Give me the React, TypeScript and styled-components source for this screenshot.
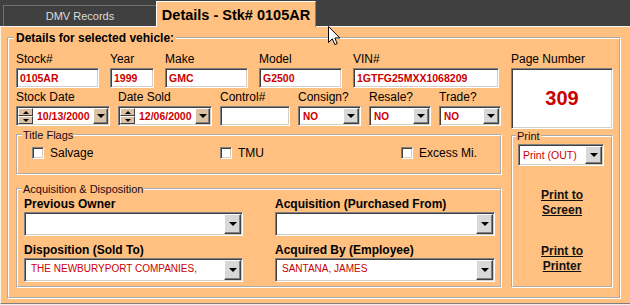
import React from "react"
import styled, { createGlobalStyle, css } from "styled-components"

const ORANGE = "#ffc080"
const RED = "#cc0000"

const GlobalStyle = createGlobalStyle`
  html, body {
    margin: 0;
    padding: 0;
    background: #f0f0f0;
  }
  body {
    font-family: "Liberation Sans", Arial, sans-serif;
    color: #000;
  }
`;

const sunken = css`
  box-sizing: border-box;
  border: 1px solid;
  border-color: #808080 #ffffff #ffffff #808080;
  box-shadow: inset 1px 1px 0 #404040, inset -1px -1px 0 #d4d0c8;
  background: #fff;
`;

const Screen = styled.div`
  position: relative;
  width: 630px;
  height: 305px;
  overflow: hidden;
`;

const TabStrip = styled.div`
  height: 26px;
  background: #404040;
  display: flex;
  align-items: flex-end;
  padding-left: 3px;
`;

const Tab = styled.div<{ $active?: boolean }>`
  box-sizing: border-box;
  display: flex;
  align-items: center;
  justify-content: center;
  ${p => p.$active ? css`
    position: relative;
    z-index: 1;
    width: 160px;
    height: 26px;
    margin-bottom: -1px;
    padding-top: 1px;
    background: ${ORANGE};
    border-top: 1px solid #ffffff;
    border-left: 1px solid #ffffff;
    border-right: 1px solid #808080;
    font-size: 14.5px;
    font-weight: bold;
    color: #000;
  ` : css`
    width: 153px;
    height: 21px;
    border-top: 1px solid #707070;
    border-left: 1px solid #707070;
    font-size: 11px;
    color: #dcdcdc;
  `}
`;

const Panel = styled.div`
  background: ${ORANGE};
  border-top: 1px solid #f4f4f4;
  border-left: 1px solid #fff4e8;
  border-bottom: 1px solid #808080;
  padding: 4px 9px 4px 6px;
`;

const Group = styled.fieldset`
  margin: 0;
  min-width: 0;
  border: 2px groove #ffffff;
`;

const MainGroup = styled(Group)`
  padding: 7px 6px 9px 7px;
`;

const FlagsGroup = styled(Group)`
  margin-top: 3px;
  padding: 5px 6px 13px 6px;
`;

const AcqGroup = styled(Group)`
  margin-top: 8px;
  padding: 2px 5px 4px 6px;
`;

const PrintGroup = styled(Group)`
  flex: 1;
  margin-top: 1px;
  padding: 2px 5px 0 5px;
`;

const BigLegend = styled.legend`
  margin-left: -2px;
  padding: 0 2px;
  font-size: 12px;
  line-height: 14px;
  font-weight: bold;
`;

const SmallLegend = styled.legend`
  margin-left: -2px;
  padding: 0 1px;
  font-size: 11px;
  line-height: 12px;
  color: #1a0a1a;
`;

const Body = styled.div`
  display: grid;
  grid-template-columns: 486px 102px;
  column-gap: 9px;
`;

const Column = styled.div`
  display: flex;
  flex-direction: column;
`;

const FieldRow = styled.div<{ $cols: string; $gap: number; $top?: number }>`
  display: grid;
  grid-template-columns: ${p => p.$cols};
  column-gap: ${p => p.$gap}px;
  margin-top: ${p => p.$top ?? 0}px;
`;

const Field = styled.div`
  display: flex;
  flex-direction: column;
  min-width: 0;
`;

const FieldLabel = styled.div`
  font-size: 12px;
  line-height: 14px;
  margin-bottom: 2px;
  white-space: nowrap;
`;

const BoldLabel = styled.div`
  font-size: 12px;
  line-height: 14px;
  font-weight: bold;
  margin-bottom: 1px;
  white-space: nowrap;
`;

const TextBox = styled.div`
  ${sunken};
  height: 20px;
  padding: 0 3px;
  font-size: 10.5px;
  font-weight: bold;
  line-height: 18px;
  color: ${RED};
  white-space: nowrap;
  overflow: hidden;
`;

const DropButton = styled.div<{ $w?: number; $tan?: boolean }>`
  box-sizing: border-box;
  flex: none;
  width: ${p => p.$w ?? 16}px;
  align-self: stretch;
  display: flex;
  align-items: center;
  justify-content: center;
  background: ${p => (p.$tan ? "#dcc2a4" : "#d8d8d8")};
  border: 1px solid;
  border-color: #ffffff #404040 #404040 #ffffff;
  box-shadow: inset -1px -1px 0 #808080;

  &::after {
    content: "";
    border-left: 4px solid transparent;
    border-right: 4px solid transparent;
    border-top: 4px solid #000;
  }
`;

const SelectBox = styled.div<{ $h: number }>`
  ${sunken};
  height: ${p => p.$h}px;
  padding: 1px;
  display: flex;
`;

const SelectText = styled.div<{ $bold?: boolean; $top?: boolean }>`
  flex: 1;
  min-width: 0;
  display: flex;
  align-items: ${p => (p.$top ? "flex-start" : "center")};
  padding: ${p => (p.$top ? "2px 5px 0" : "0 3px")};
  font-size: ${p => (p.$bold ? "10px" : "10.5px")};
  font-weight: ${p => (p.$bold ? "bold" : "normal")};
  color: ${RED};
  white-space: nowrap;
  overflow: hidden;
`;

const ComboText = styled(SelectText)`
  font-size: 10px;
  padding: 3px 5px 0;
`;

const Spinner = styled.div`
  flex: none;
  width: 15px;
  display: flex;
  flex-direction: column;
`;

const SpinButton = styled.div<{ $up?: boolean }>`
  box-sizing: border-box;
  flex: 1;
  display: flex;
  align-items: center;
  justify-content: center;
  background: #dcc2a4;
  border: 1px solid;
  border-color: #ffffff #404040 #404040 #ffffff;

  &::after {
    content: "";
    border-left: 3px solid transparent;
    border-right: 3px solid transparent;
    ${p => (p.$up ? "border-bottom: 3px solid #000;" : "border-top: 3px solid #000;")}
  }
`;

const DateText = styled.div`
  flex: 1;
  display: flex;
  align-items: center;
  padding-left: 4px;
  font-size: 10.5px;
  font-weight: bold;
  color: ${RED};
  white-space: nowrap;
`;

const FlagRow = styled.div`
  display: grid;
  grid-template-columns: 188px 181px auto;
  padding-left: 8px;
`;

const CheckItem = styled.label`
  display: flex;
  align-items: center;
  gap: 6px;
  font-size: 12px;
  line-height: 14px;
`;

const CheckBox = styled.span`
  ${sunken};
  width: 12px;
  height: 12px;
  flex: none;
`;

const AcqGrid = styled.div`
  display: grid;
  grid-template-columns: 219px 220px;
  column-gap: 32px;
  row-gap: 7px;
`;

const PageBox = styled.div`
  ${sunken};
  height: 61px;
  display: flex;
  align-items: center;
  justify-content: center;
  font-size: 20px;
  font-weight: bold;
  color: ${RED};
`;

const PrintInner = styled.div`
  display: flex;
  flex-direction: column;
  align-items: flex-start;
`;

const PrintSelect = styled(SelectBox)`
  width: 86px;
`;

const PrintLink = styled.a<{ $top: number }>`
  align-self: stretch;
  margin-top: ${p => p.$top}px;
  font-size: 12px;
  line-height: 15px;
  font-weight: bold;
  text-align: center;
  text-decoration: underline;
  color: #111;
  cursor: pointer;
`;

const Cursor = styled.svg`
  position: absolute;
  left: 328px;
  top: 26px;
`;

const Select = ({ value }: { value: string }) => (
  <SelectBox $h={20}>
    <SelectText $bold>{value}</SelectText>
    <DropButton />
  </SelectBox>
)

const Combo = ({ value }: { value?: string }) => (
  <SelectBox $h={24}>
    <ComboText $top>{value}</ComboText>
    <DropButton $w={17} />
  </SelectBox>
)

const DateField = ({ value }: { value: string }) => (
  <SelectBox $h={20}>
    <Spinner>
      <SpinButton $up />
      <SpinButton />
    </Spinner>
    <DateText>{value}</DateText>
    <DropButton $w={15} $tan />
  </SelectBox>
)

const App = () => {
  return (
    <Screen>
      <GlobalStyle />
      <TabStrip>
        <Tab>DMV Records</Tab>
        <Tab $active>Details - Stk# 0105AR</Tab>
      </TabStrip>
      <Panel>
        <MainGroup>
          <BigLegend>Details for selected vehicle:</BigLegend>
          <Body>
            <Column>
              <FieldRow $cols="83px 44px 83px 83px 146px" $gap={11}>
                <Field><FieldLabel>Stock#</FieldLabel><TextBox>0105AR</TextBox></Field>
                <Field><FieldLabel>Year</FieldLabel><TextBox>1999</TextBox></Field>
                <Field><FieldLabel>Make</FieldLabel><TextBox>GMC</TextBox></Field>
                <Field><FieldLabel>Model</FieldLabel><TextBox>G2500</TextBox></Field>
                <Field><FieldLabel>VIN#</FieldLabel><TextBox>1GTFG25MXX1068209</TextBox></Field>
              </FieldRow>
              <FieldRow $cols="94px 94px 70px 63px 62px 62px" $gap={8} $top={2}>
                <Field><FieldLabel>Stock Date</FieldLabel><DateField value="10/13/2000" /></Field>
                <Field><FieldLabel>Date Sold</FieldLabel><DateField value="12/06/2000" /></Field>
                <Field><FieldLabel>Control#</FieldLabel><TextBox /></Field>
                <Field><FieldLabel>Consign?</FieldLabel><Select value="NO" /></Field>
                <Field><FieldLabel>Resale?</FieldLabel><Select value="NO" /></Field>
                <Field><FieldLabel>Trade?</FieldLabel><Select value="NO" /></Field>
              </FieldRow>

              <FlagsGroup>
                <SmallLegend>Title Flags</SmallLegend>
                <FlagRow>
                  <CheckItem><CheckBox />Salvage</CheckItem>
                  <CheckItem><CheckBox />TMU</CheckItem>
                  <CheckItem><CheckBox />Excess Mi.</CheckItem>
                </FlagRow>
              </FlagsGroup>

              <AcqGroup>
                <SmallLegend>Acquisition &amp; Disposition</SmallLegend>
                <AcqGrid>
                  <Field><BoldLabel>Previous Owner</BoldLabel><Combo /></Field>
                  <Field><BoldLabel>Acquisition (Purchased From)</BoldLabel><Combo /></Field>
                  <Field><BoldLabel>Disposition (Sold To)</BoldLabel><Combo value="THE NEWBURYPORT COMPANIES," /></Field>
                  <Field><BoldLabel>Acquired By (Employee)</BoldLabel><Combo value="SANTANA, JAMES" /></Field>
                </AcqGrid>
              </AcqGroup>
            </Column>

            <Column>
              <FieldLabel>Page Number</FieldLabel>
              <PageBox>309</PageBox>
              <PrintGroup>
                <SmallLegend>Print</SmallLegend>
                <PrintInner>
                  <PrintSelect $h={22}>
                    <SelectText>Print (OUT)</SelectText>
                    <DropButton $w={17} />
                  </PrintSelect>
                  <PrintLink $top={22}>Print to<br />Screen</PrintLink>
                  <PrintLink $top={26}>Print to<br />Printer</PrintLink>
                </PrintInner>
              </PrintGroup>
            </Column>
          </Body>
        </MainGroup>
      </Panel>

      <Cursor width="13" height="20" viewBox="0 0 13 20">
        <path d="M0.5 0.5 V16.5 L4.3 12.8 L6.8 18.6 L9.2 17.6 L6.8 12 H11.8 Z" fill="#fff" stroke="#000" strokeWidth="1" strokeLinejoin="miter" />
      </Cursor>
    </Screen>
  )
}

export default App
